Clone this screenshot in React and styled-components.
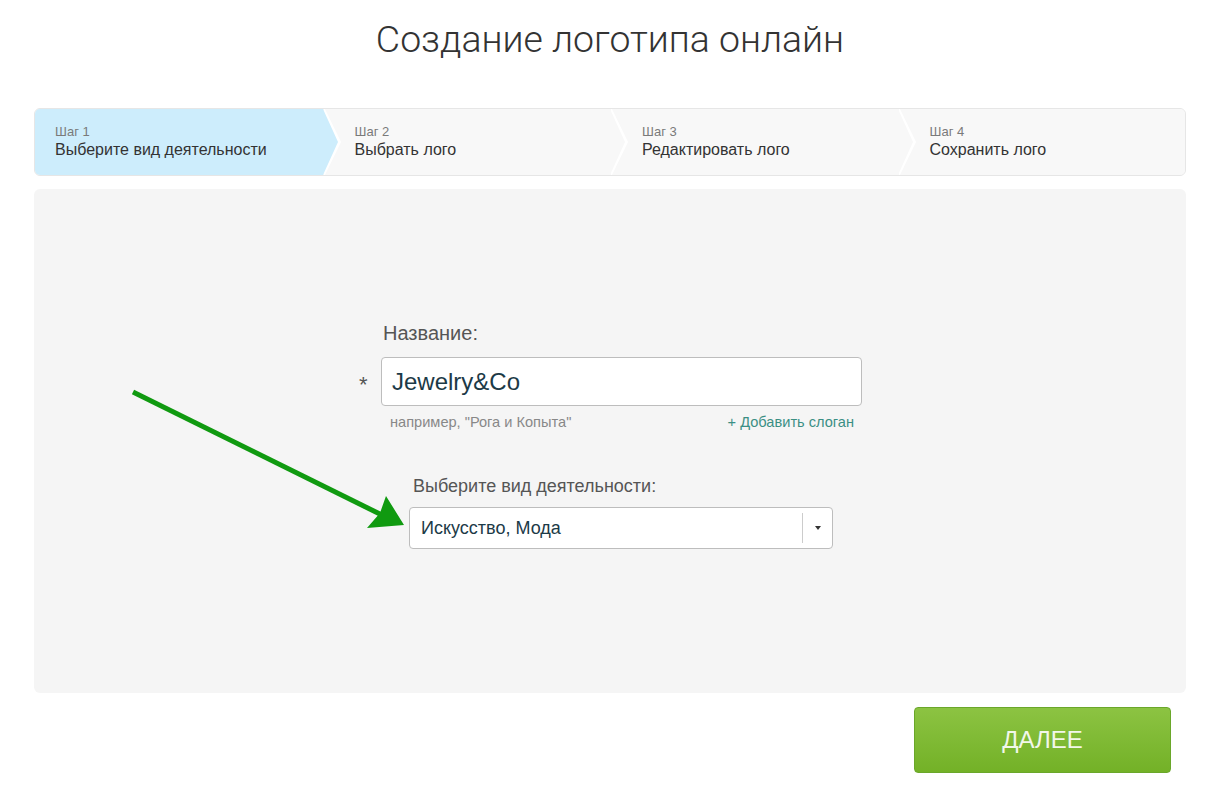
import React from "react";
import styled, { createGlobalStyle } from "styled-components";

const GlobalStyle = createGlobalStyle`
  body { margin: 0; background: #fff; font-family: "Liberation Sans", Arial, sans-serif; color: #333; }
  * { box-sizing: border-box; }
`;

const Page = styled.div`
  padding: 0 31px 0 34px;
`;

const Title = styled.h1`
  margin: 0; padding: 17px 0 0; height: 108px;
  text-align: center; font-family: Roboto, "Liberation Sans", sans-serif;
  font-weight: 300; font-size: 37.4px; line-height: 44px; color: #333;
`;

const Steps = styled.div`
  display: flex; height: 68px; border: 1px solid #e6e6e6; border-radius: 6px;
  background: #f8f8f8; overflow: hidden;
`;

const Step = styled.div`
  position: relative; flex: 0 0 25%; min-width: 0; display: flex; flex-direction: column; justify-content: center;
  padding-left: ${p => (p.$first ? "20px" : "32px")};
  background: ${p => (p.$active ? "#cdedfc" : "#f8f8f8")};
  z-index: ${p => p.$z};
  &:last-child::before, &:last-child::after { display: none; }
  &::before {
    content: ""; position: absolute; top: -2px; right: -18px;
    border-left: 17px solid #fff; border-top: 35px solid transparent; border-bottom: 35px solid transparent;
  }
  &::after {
    content: ""; position: absolute; top: 0; right: -15px;
    border-left: 15px solid ${p => (p.$active ? "#cdedfc" : "#f8f8f8")};
    border-top: 33px solid transparent; border-bottom: 33px solid transparent;
  }
`;

const StepNum = styled.div` font-size: 13px; line-height: 16px; color: #7a7a7a; `;
const StepName = styled.div` font-size: 16px; line-height: 20px; color: #333; `;

const Panel = styled.div`
  position: relative; margin-top: 13px; height: 504px; background: #f5f5f5; border-radius: 6px;
  padding: 132px 0 0 325px;
`;

const FieldLabel = styled.div`
  font-size: 20px; line-height: 24px; color: #555; margin-left: 24px; margin-bottom: 12px;
`;

const InputRow = styled.div` display: flex; align-items: center; `;
const Asterisk = styled.span` width: 22px; font-size: 22px; color: #555; padding-top: 6px; `;

const TextInput = styled.div`
  width: 481px; height: 49px; border: 1px solid #bdbdbd; border-radius: 4px; background: #fff;
  padding: 0 10px; display: flex; align-items: center; font-size: 24px; color: #1c3a47;
`;

const Hints = styled.div`
  display: flex; justify-content: space-between; width: 481px; margin-left: 22px; padding: 0 8px 0 9px;
  margin-top: 7px; font-size: 14.6px; line-height: 18px; color: #888;
`;
const Link = styled.span` color: #3b8f84; `;

const SelectGroup = styled.div` margin: 44px 0 0 50px; `;
const SelectLabel = styled.div` font-size: 18px; line-height: 22px; color: #555; margin: 0 0 10px 4px; `;

const Select = styled.div`
  width: 424px; height: 42px; border: 1px solid #bdbdbd; border-radius: 4px; background: #fff;
  display: flex; align-items: center; padding-left: 11px; font-size: 18px; color: #1c3a47;
`;
const SelectValue = styled.span` flex: 1; `;
const Caret = styled.span`
  width: 30px; height: 30px; border-left: 1px solid #ccc; display: flex; align-items: center; justify-content: center;
  &::after { content: ""; border-top: 4px solid #333; border-left: 3px solid transparent; border-right: 3px solid transparent; }
`;

const Arrow = styled.svg` position: absolute; left: 96px; top: 200px; overflow: visible; `;

const Footer = styled.div` display: flex; justify-content: flex-end; padding: 14px 15px 0 0; `;
const NextButton = styled.button`
  width: 257px; height: 66px; border: 1px solid #6aa72a; border-radius: 4px;
  background: linear-gradient(#8cc342, #73b127); color: #f2f7ea;
  font-family: "Liberation Sans", Arial, sans-serif; font-size: 24px; cursor: pointer;
`;

export default function App() {
  const steps = ["Выберите вид деятельности", "Выбрать лого", "Редактировать лого", "Сохранить лого"];
  return (
    <Page>
      <GlobalStyle />
      <Title>Создание логотипа онлайн</Title>
      <Steps>
        {steps.map((s, i) => (
          <Step key={s} $first={i === 0} $active={i === 0} $z={10 - i}>
            <StepNum>Шаг {i + 1}</StepNum>
            <StepName>{s}</StepName>
          </Step>
        ))}
      </Steps>
      <Panel>
        <FieldLabel>Название:</FieldLabel>
        <InputRow>
          <Asterisk>*</Asterisk>
          <TextInput>Jewelry&amp;Co</TextInput>
        </InputRow>
        <Hints>
          <span>например, "Рога и Копыта"</span>
          <Link>+ Добавить слоган</Link>
        </Hints>
        <SelectGroup>
          <SelectLabel>Выберите вид деятельности:</SelectLabel>
          <Select>
            <SelectValue>Искусство, Мода</SelectValue>
            <Caret />
          </Select>
        </SelectGroup>
        <Arrow width="280" height="140">
          <line x1="3" y1="3" x2="262" y2="131" stroke="#109a10" strokeWidth="5" />
          <polygon points="274,136 256,107 250,124 237,139" fill="#109a10" />
        </Arrow>
      </Panel>
      <Footer>
        <NextButton>ДАЛЕЕ</NextButton>
      </Footer>
    </Page>
  );
}
